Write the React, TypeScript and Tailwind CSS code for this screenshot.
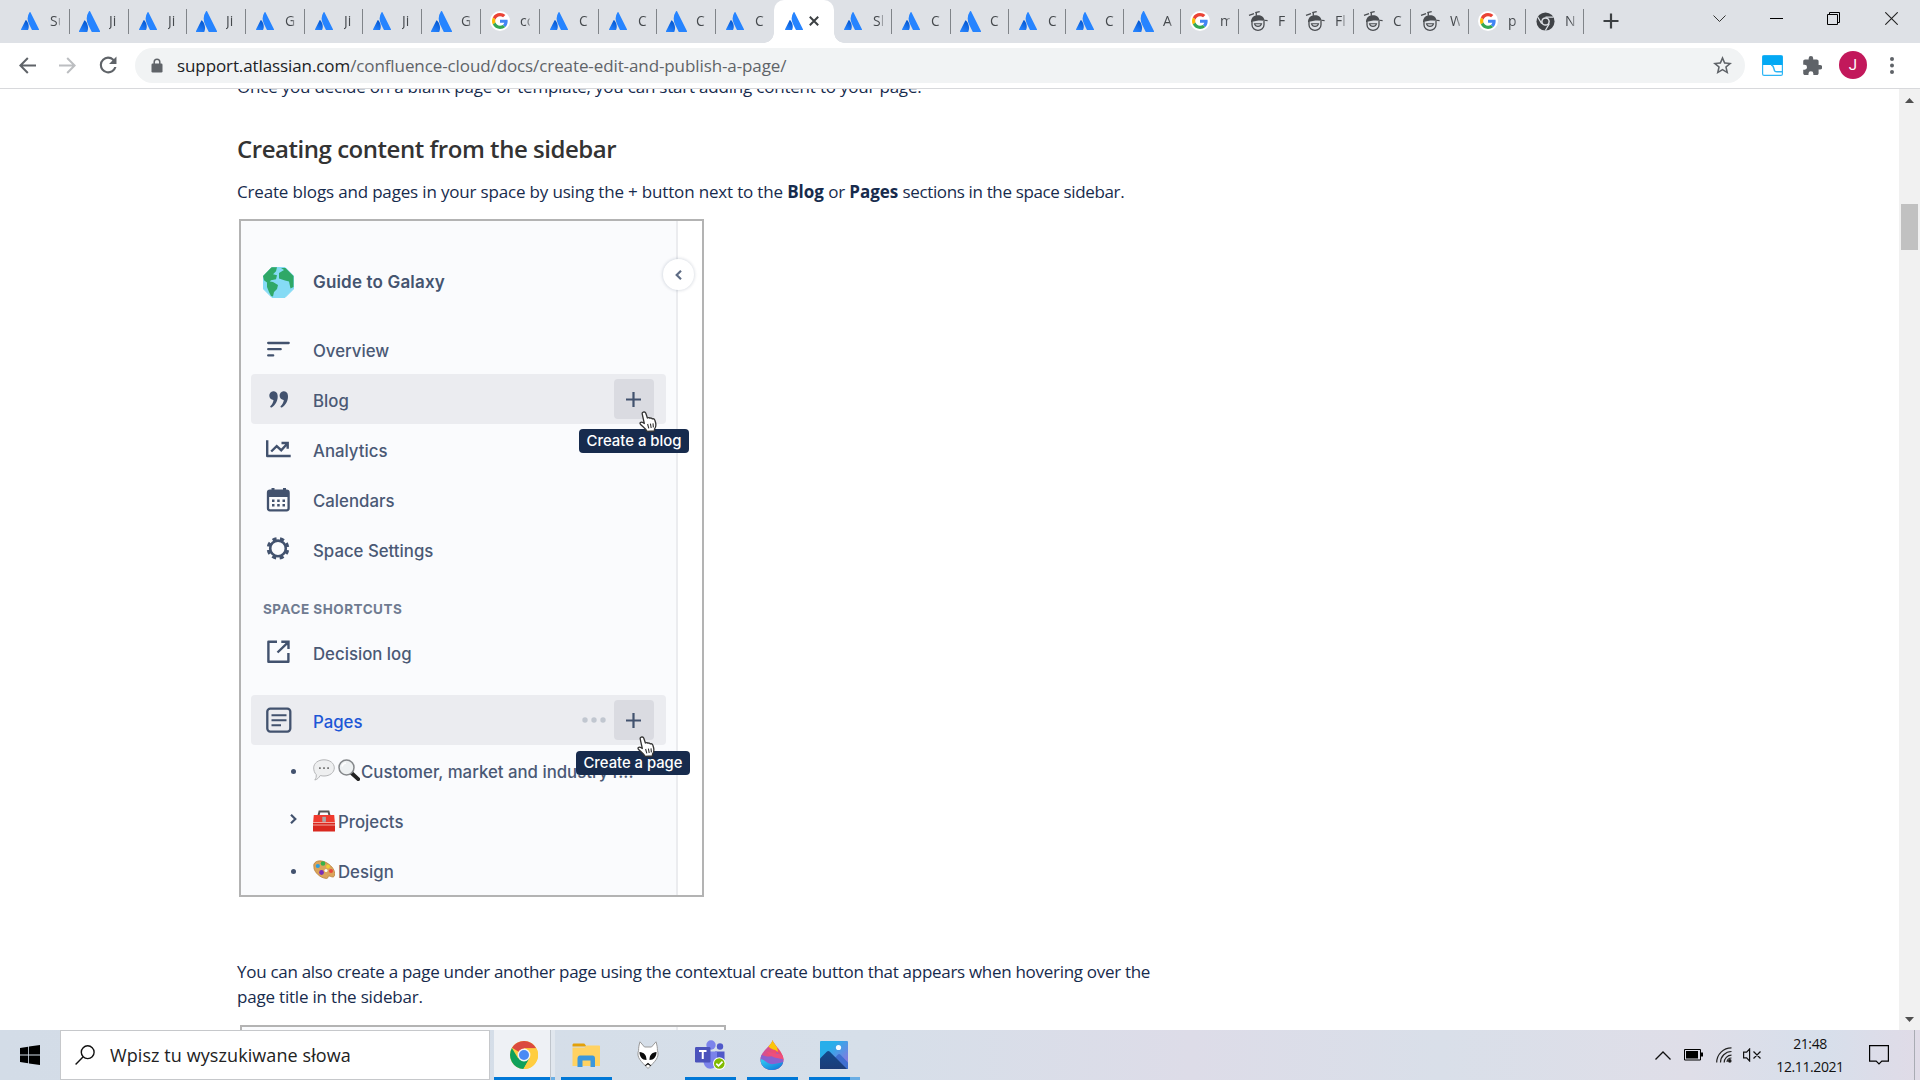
import type { ReactNode } from "react";

type Favicon = "atl" | "atlLarge" | "google" | "hat" | "chrome";
type Tab = { icon: Favicon; text: string; width: number };

const leftTabs: Tab[] = [
  { icon: "atl", text: "Su", width: 59 },
  { icon: "atlLarge", text: "Ji", width: 59 },
  { icon: "atl", text: "Ji", width: 58 },
  { icon: "atlLarge", text: "Ji", width: 59 },
  { icon: "atl", text: "G", width: 59 },
  { icon: "atl", text: "Ji", width: 58 },
  { icon: "atl", text: "Ji", width: 59 },
  { icon: "atlLarge", text: "G", width: 59 },
  { icon: "google", text: "co", width: 59 },
  { icon: "atl", text: "C", width: 59 },
  { icon: "atl", text: "C", width: 58 },
  { icon: "atlLarge", text: "C", width: 59 },
  { icon: "atl", text: "C", width: 58 },
];

const rightTabs: Tab[] = [
  { icon: "atl", text: "Sl", width: 58 },
  { icon: "atl", text: "C", width: 59 },
  { icon: "atlLarge", text: "C", width: 58 },
  { icon: "atl", text: "C", width: 57 },
  { icon: "atl", text: "C", width: 58 },
  { icon: "atlLarge", text: "A", width: 57 },
  { icon: "google", text: "m", width: 58 },
  { icon: "hat", text: "F", width: 57 },
  { icon: "hat", text: "Fl", width: 58 },
  { icon: "hat", text: "C", width: 57 },
  { icon: "hat", text: "W", width: 58 },
  { icon: "google", text: "p", width: 57 },
  { icon: "chrome", text: "N", width: 58 },
];

function Atlassian({ large = false }: { large?: boolean }) {
  return (
    <svg viewBox="0 0 24 24" className={large ? "h-[21px] w-[21px]" : "h-[18px] w-[18px]"}>
      <defs>
        <linearGradient id="atl" x1="10" y1="12" x2="3" y2="24" gradientUnits="userSpaceOnUse">
          <stop offset="0" stopColor="#0052cc" />
          <stop offset="1" stopColor="#2684ff" />
        </linearGradient>
      </defs>
      <path fill="url(#atl)" d="M7.12 11.084a.683.683 0 00-1.16.126L.075 22.974a.703.703 0 00.63 1.018h8.19a.678.678 0 00.63-.39c1.767-3.65.696-9.203-2.406-12.52z" />
      <path fill="#2684ff" d="M11.434.386a15.515 15.515 0 00-.906 15.317l3.95 7.9a.703.703 0 00.628.388h8.19a.703.703 0 00.63-1.017L12.63.38a.664.664 0 00-1.196.006z" />
    </svg>
  );
}

function Google() {
  return (
    <span className="flex h-5 w-5 items-center justify-center rounded-full bg-white">
      <svg viewBox="0 0 48 48" className="h-4 w-4">
        <path fill="#ea4335" d="M24 9.5c3.54 0 6.71 1.22 9.21 3.6l6.85-6.85C35.9 2.38 30.47 0 24 0 14.62 0 6.51 5.38 2.56 13.22l7.98 6.19C12.43 13.72 17.74 9.5 24 9.5z" />
        <path fill="#4285f4" d="M46.98 24.55c0-1.57-.15-3.09-.38-4.55H24v9.02h12.94c-.58 2.96-2.26 5.48-4.78 7.18l7.73 6c4.51-4.18 7.09-10.36 7.09-17.65z" />
        <path fill="#fbbc05" d="M10.53 28.59c-.48-1.45-.76-2.99-.76-4.59s.27-3.14.76-4.59l-7.98-6.19C.92 16.46 0 20.12 0 24c0 3.88.92 7.54 2.56 10.78l7.97-6.19z" />
        <path fill="#34a853" d="M24 48c6.48 0 11.93-2.13 15.89-5.81l-7.73-6c-2.15 1.45-4.92 2.3-8.16 2.3-6.26 0-11.57-4.22-13.47-9.91l-7.98 6.19C6.51 42.62 14.62 48 24 48z" />
      </svg>
    </span>
  );
}

function HatFace() {
  return (
    <svg viewBox="0 0 20 20" className="h-5 w-5" fill="none" stroke="#4a4d51">
      <path fill="#4a4d51" stroke="none" d="M3 10.200C3.500 6 6.500 4 10 4.200c3.600 0 6 2 6.400 4.600l3.200.2v1.300C14 8.900 8.500 9.200 3 11.200z" />
      <path strokeWidth="1.300" d="M4 10.500v3.200a6 5.600 0 0012 0v-3.800" />
      <path strokeWidth="1.100" d="M6.500 12.800c1 3.400 6 3.400 7 0z" />
      <path strokeWidth="1.300" d="M1 4.300l5-1.600M7.200 1.600l4.500-1M8.300 1.200v3.500" />
    </svg>
  );
}

function ChromeMono() {
  return (
    <svg viewBox="0 0 20 20" className="h-[19px] w-[19px]">
      <circle cx="10" cy="10" r="9.500" fill="#3f4246" />
      <circle cx="10" cy="10" r="4.600" fill="#dee1e6" />
      <circle cx="10" cy="10" r="3" fill="#3f4246" />
      <path d="M10 5.400h8.500M6 12.300L1.800 5.200M14 12.300L9.800 19.500" stroke="#dee1e6" strokeWidth="1.300" />
    </svg>
  );
}

function FaviconView({ icon }: { icon: Favicon }) {
  if (icon === "google") return <Google />;
  if (icon === "hat") return <HatFace />;
  if (icon === "chrome") return <ChromeMono />;
  return <Atlassian large={icon === "atlLarge"} />;
}

function TabView({ tab, divider = true }: { tab: Tab; divider?: boolean }) {
  return (
    <div className="flex h-[43px] shrink-0 items-center" style={{ width: tab.width }}>
      <span className="mb-px ml-2 flex w-[22px] shrink-0 justify-center">
        <FaviconView icon={tab.icon} />
      </span>
      <span className="mb-[2px] ml-[9px] w-[10px] overflow-hidden font-['Open_Sans'] text-[14px] leading-5 whitespace-nowrap text-[#45494d] [mask-image:linear-gradient(90deg,#000_60%,rgba(0,0,0,0.350))]">
        {tab.text}
      </span>
      {divider && <span className="ml-auto h-[25px] w-px bg-[#808489]" />}
    </div>
  );
}

function TabStrip() {
  return (
    <div className="flex h-[43px] items-center bg-[#dee1e6] pl-[11px]">
      {leftTabs.map((t, i) => (
        <TabView key={i} tab={t} divider={i < leftTabs.length - 1} />
      ))}
      <div className="relative flex h-[43px] w-[60px] shrink-0 items-center rounded-t-[10px] bg-white">
        <span className="absolute bottom-0 -left-[10px] h-[10px] w-[10px] bg-[radial-gradient(circle_at_0_0,#dee1e6_9.5px,white_10px)]" />
        <span className="absolute -right-[10px] bottom-0 h-[10px] w-[10px] bg-[radial-gradient(circle_at_100%_0,#dee1e6_9.5px,white_10px)]" />
        <span className="mb-px ml-[11px]">
          <Atlassian />
        </span>
        <svg viewBox="0 0 10 10" className="mb-px ml-[6px] h-[10px] w-[10px]" stroke="#3c4043" strokeWidth="2">
          <path d="M.8.8l8.400 8.400M9.200.8L.8 9.200" />
        </svg>
      </div>
      {rightTabs.map((t, i) => (
        <TabView key={i} tab={t} />
      ))}
      <svg viewBox="0 0 16 16" className="mb-px ml-[19px] h-4 w-4" stroke="#3c4043" strokeWidth="2.200">
        <path d="M8 .5v15M.5 8h15" />
      </svg>
      <div className="mr-[22px] mb-[6px] ml-auto flex items-center gap-[44px]">
        <svg viewBox="0 0 13 13" className="h-[13px] w-[13px]" fill="none" stroke="#333">
          <path d="M.5 3.500l6 6 6-6" />
        </svg>
        <svg viewBox="0 0 13 13" className="h-[13px] w-[13px]" fill="none" stroke="#000">
          <path d="M0 6.500h13" />
        </svg>
        <svg viewBox="0 0 13 13" className="h-[13px] w-[13px]" fill="none" stroke="#000">
          <path d="M.5 2.500h10v10H.5zM2.500 2.500v-2h10v10h-2" />
        </svg>
        <svg viewBox="0 0 13 13" className="ml-px h-[13px] w-[13px]" fill="none" stroke="#222" strokeWidth="1.100">
          <path d="M.3.3l12.400 12.400M12.700.3L.3 12.700" />
        </svg>
      </div>
    </div>
  );
}

function Toolbar() {
  return (
    <div className="flex h-[46px] items-center border-b border-[#d8d9dc] bg-white pr-[22px] pb-px pl-[19px]">
      <svg viewBox="0 0 16 16" className="h-[17px] w-[17px]" fill="none" stroke="#5f6368" strokeWidth="1.900">
        <path d="M16 8H1.500M8.300 1L1.300 8l7 7" />
      </svg>
      <svg viewBox="0 0 16 16" className="ml-[23px] h-[17px] w-[17px]" fill="none" stroke="#bcbec1" strokeWidth="1.900">
        <path d="M0 8h14.500M7.700 1l7 7-7 7" />
      </svg>
      <svg viewBox="3.500 3.500 17 17" className="ml-[23px] h-[18px] w-[18px]" fill="#5f6368">
        <path d="M17.650 6.350A7.960 7.960 0 0012 4a8 8 0 108 10h-2.080A6 6 0 1112 6c1.660 0 3.140.69 4.220 1.780L13 11h7V4l-2.350 2.350z" />
      </svg>
      <div className="ml-[18px] flex h-[35px] w-[1610px] items-center rounded-full bg-[#f1f3f4] pr-[13px] pl-[16px]">
        <svg viewBox="0 0 12 15" className="h-[15px] w-[12px]">
          <path d="M3.200 7V4a2.800 2.800 0 015.600 0v3" fill="none" stroke="#5f6368" strokeWidth="1.500" />
          <rect x=".5" y="5.500" width="11" height="9" rx="1.200" fill="#5f6368" />
        </svg>
        <span className="ml-[14px] pt-px font-['Open_Sans'] text-[17px] leading-6 tracking-[-0.100px] whitespace-nowrap text-[#5f6368]">
          <span className="text-[#202124]">support.atlassian.com</span>/confluence-cloud/docs/create-edit-and-publish-a-page/
        </span>
        <svg viewBox="2 2 20 20" className="ml-auto h-[19px] w-[19px]" fill="#5f6368">
          <path d="M22 9.240l-7.190-.62L12 2 9.190 8.630 2 9.240l5.460 4.730L5.820 21 12 17.270 18.180 21l-1.630-7.030L22 9.240zM12 15.400l-3.760 2.270 1-4.280-3.320-2.880 4.380-.38L12 6.100l1.710 4.040 4.380.38-3.320 2.880 1 4.280L12 15.400z" />
        </svg>
      </div>
      <svg viewBox="0 0 21 21" className="ml-[17px] h-[21px] w-[21px]">
        <rect x=".6" y=".6" width="19.800" height="19.800" rx="1.500" fill="#fff" stroke="#2db5f5" strokeWidth="1.200" />
        <path d="M.5.8h20V10H.5z" fill="#03a9f4" />
        <path d="M9 10c2.200 0 2.400 1.500 3 4s1 2.700 3 2.700h5" fill="none" stroke="#2db5f5" strokeWidth="1.400" />
      </svg>
      <svg viewBox="2 1 20.500 21" className="ml-[20px] h-[19px] w-[19px]" fill="#5f6368">
        <path d="M20.500 11H19V7c0-1.100-.9-2-2-2h-4V3.500a2.500 2.500 0 00-5 0V5H4c-1.100 0-2 .9-2 2v3.800h1.500a2.700 2.700 0 010 5.400H2V20c0 1.100.9 2 2 2h3.800v-1.500a2.700 2.700 0 015.400 0V22H17c1.100 0 2-.9 2-2v-4h1.500a2.500 2.500 0 000-5z" />
      </svg>
      <span className="ml-[17px] flex h-7 w-7 items-center justify-center rounded-full bg-[#c2185b] font-['Roboto'] text-[15px] text-white">
        J
      </span>
      <svg viewBox="0 0 4 17" className="ml-[23px] h-[17px] w-1" fill="#5f6368">
        <circle cx="2" cy="2" r="2" />
        <circle cx="2" cy="8.500" r="2" />
        <circle cx="2" cy="15" r="2" />
      </svg>
    </div>
  );
}

const glyph = "#42526e";

function OverviewIcon() {
  return (
    <svg viewBox="0 0 26 26" className="h-[26px] w-[26px]" stroke={glyph} strokeWidth="2.300" strokeLinecap="round">
      <path d="M2.200 7h20.500M2.200 13.200h12.500M2.200 19.400h5" />
    </svg>
  );
}

function QuoteIcon() {
  return (
    <svg viewBox="0 0 26 26" className="h-[26px] w-[26px]" fill={glyph}>
      <path transform="translate(0 .8)" d="M3.300 9a4.100 4.100 0 018.300-.6c.7 4.600-2 9.800-6 12.200-1 .5-1.900-.5-1.100-1.300 1.700-1.700 2.700-3.900 3-6.200A4.100 4.100 0 013.300 9zM13.600 9a4.100 4.100 0 018.300-.6c.7 4.600-2 9.800-6 12.200-1 .5-1.900-.5-1.100-1.300 1.700-1.700 2.700-3.900 3-6.200A4.100 4.100 0 0113.600 9z" />
    </svg>
  );
}

function AnalyticsIcon() {
  return (
    <svg viewBox="0 0 26 26" className="h-[26px] w-[26px]" fill="none" stroke={glyph} strokeWidth="2.400">
      <path d="M1.200 4.200V20h23.500" strokeLinejoin="round" />
      <path d="M5.200 15.500l5.500-5.300 4.500 4 6-6.500M15.500 7h6.200v5.700" />
    </svg>
  );
}

function CalendarIcon() {
  return (
    <svg viewBox="0 0 26 26" className="mt-px h-[26px] w-[26px]">
      <rect x="2" y="3.700" width="20.600" height="19.600" rx="2" fill="none" stroke={glyph} strokeWidth="2.300" />
      <path d="M2 4h21v6H2zM5.500 1h3v4h-3zM17 1h3v4h-3z" fill={glyph} />
      <path d="M6 12.500h2.500V15H6zm5.200 0h2.500V15h-2.500zm5.300 0H19V15h-2.500zM6 17h2.500v2.500H6zm5.200 0h2.500v2.500h-2.500zm5.300 0H19v2.500h-2.500z" fill={glyph} />
    </svg>
  );
}

function GearIcon() {
  return (
    <svg viewBox="0 0 26 26" className="h-[26px] w-[26px]" fill="none" stroke={glyph}>
      <circle cx="12" cy="12.400" r="7.800" strokeWidth="2.600" />
      <circle cx="12" cy="12.400" r="9.700" strokeWidth="3.200" strokeDasharray="4.100 3.518" strokeDashoffset="-1.760" />
    </svg>
  );
}

function ShortcutIcon() {
  return (
    <svg viewBox="0 0 26 26" className="h-[26px] w-[26px]" fill="none" stroke={glyph} strokeWidth="2.400">
      <path d="M11 2.700H2.400v20h20V14" strokeLinejoin="round" />
      <path d="M15.300 2.700h7.200V10M22 3.400L11.500 13.500" />
      <path d="M17.800 2.500h5v5z" fill={glyph} stroke="none" />
    </svg>
  );
}

function PagesIcon() {
  return (
    <svg viewBox="0 0 26 26" className="h-[26px] w-[26px]" fill="none" stroke={glyph} strokeWidth="2.300">
      <rect x="1.300" y="1.600" width="23" height="23" rx="3" />
      <path d="M5.500 8.300h15M5.500 13.200h15M5.500 18.200h9.500" strokeWidth="2" />
    </svg>
  );
}

function Globe() {
  return (
    <svg viewBox="0 0 31 31" className="h-[31px] w-[31px]">
      <path d="M9 .5h13L30.500 9v13L22 30.500H9L.5 22V9z" fill="#85dbf5" stroke="#85dbf5" strokeLinejoin="round" />
      <path d="M8.500.2H14l-1 4-3 3 4 1-1 4-5 1-3 3-4-3L0 9zM4 14l6 1 5 3-1 4-3 3-1 4.500-2-.500-2-4-2-5zM16 6l5-3-3-2h4.500l8 8v11l-3 1.500-1.500-7-4-1-6-2z" fill="#2fa867" />
    </svg>
  );
}

function Bubble() {
  return (
    <svg viewBox="0 0 22 22" className="h-[22px] w-[22px]">
      <path d="M11 .8c5.800 0 10.300 3.400 10.300 8.100S16.800 17 11 17c-1.300 0-2.600-.2-3.700-.5C6 18.700 4 20.700 1.800 21c1.200-1.500 1.700-3.500 1.400-5.500C1.600 14 .7 11.600.7 8.900.7 4.200 5.200.8 11 .8z" fill="#eeeff0" stroke="#b4b5b7" />
      <path d="M6 9.100h1.800M10.100 9.100h1.800M14.200 9.100H16" stroke="#777" strokeWidth="1.800" />
    </svg>
  );
}

function Loupe() {
  return (
    <svg viewBox="0 0 22 22" className="h-[22px] w-[22px]">
      <path d="M13.500 14l6.700 6.200" stroke="#222" strokeWidth="3.800" strokeLinecap="round" />
      <circle cx="8.500" cy="8.500" r="7.500" fill="#eef1f2" stroke="#85888b" strokeWidth="1.500" />
      <path d="M4 7.500c.5-2 2-3.300 4-3.500" stroke="#fff" strokeWidth="1.600" fill="none" />
    </svg>
  );
}

function Toolbox() {
  return (
    <svg viewBox="0 0 22 22" className="mt-px h-[22px] w-[22px]">
      <path d="M5.500 5.500l1-4h9l1 4" fill="none" stroke="#555" strokeWidth="2" />
      <path d="M.8 5h20.400l.8 9H0z" fill="#f03a2e" />
      <path d="M0 12.500h22v9H0z" fill="#d9281f" />
      <path d="M0 12.500h22M0 15h22" stroke="#f2b3ac" strokeWidth=".9" />
      <rect x="9.300" y="6.800" width="3.600" height="5" fill="#a8a8a8" />
    </svg>
  );
}

function Palette() {
  return (
    <svg viewBox="0 0 22 22" className="h-[22px] w-[22px]">
      <path d="M1 5C3 1 9 1 14 4s8.500 7.500 7.500 12.500c-1 3-4 .5-5.500.5s-.5 2.500-2.500 2.500C7 19 2 13.500 1 9.500 1 8 .5 6.500 1 5z" fill="#dba45a" stroke="#b9803a" strokeWidth=".8" />
      <circle cx="10" cy="4.500" r="2.300" fill="#36b24a" />
      <circle cx="4.800" cy="7" r="2.100" fill="#2b9fe0" />
      <circle cx="15" cy="7.500" r="1.900" fill="#f1cf32" />
      <circle cx="8.500" cy="13.500" r="2.400" fill="#7a2fb8" />
      <circle cx="18" cy="12" r="2" fill="#e8483b" />
      <circle cx="13" cy="11.500" r="1.600" fill="#fafbfc" />
    </svg>
  );
}

function HandCursor() {
  return (
    <svg viewBox="0 0 19 21" className="h-[21px] w-[19px]" strokeLinejoin="round">
      <path d="M4.200 1.200c1.200-.6 2.300.1 2.700 1.300L8.400 7c.8-.7 2-.6 2.500.3.9-.6 2-.3 2.400.6 1-.4 2-.1 2.400 1 1 2.800 2.500 6-.1 9l-.3 2.100-7.200.4c-1.500-3-4.500-4.800-6.700-7.200-1-1.400.5-2.600 1.900-1.900l2 1.200L3.300 3.300c-.3-.9.1-1.800.9-2.100z" fill="#fff" stroke="#333" strokeWidth="1.300" />
      <path d="M8.600 13l1.200 4.300M11.400 12.700l.8 4.300M14 12.400l.4 4" stroke="#333" strokeWidth="1.100" fill="none" />
    </svg>
  );
}

function PlusButton({ tip, tipClass, cursorClass }: { tip: string; tipClass: string; cursorClass: string }) {
  return (
    <span className="relative mr-3 flex h-10 w-10 items-center justify-center rounded-[4px] bg-[#dadbe1] pr-px">
      <svg viewBox="0 0 15 15" className="h-[15px] w-[15px]" stroke={glyph} strokeWidth="2.200">
        <path d="M7.500 0v15M0 7.500h15" />
      </svg>
      <span className={tipClass}>{tip}</span>
      <span className={cursorClass}>
        <HandCursor />
      </span>
    </span>
  );
}

function Row({ icon, label, children, active = false, blue = false }: { icon: ReactNode; label: string; children?: ReactNode; active?: boolean; blue?: boolean }) {
  return (
    <div className={active ? "relative z-10 flex h-[50px] items-center rounded-[4px] bg-[#ebecf0] pl-[15px]" : "flex h-[50px] items-center pl-[15px]"}>
      {icon}
      <span className={blue ? "ml-[21px] pt-[3px] text-[#1d57d6]" : "ml-[21px] pt-[3px]"}>{label}</span>
      <span className="ml-auto flex items-center">{children}</span>
    </div>
  );
}

function TreeRow({ expandable = false, emojis, label, tight = false }: { expandable?: boolean; emojis: ReactNode; label: string; tight?: boolean }) {
  return (
    <div className="flex h-[50px] items-center pl-[39px]">
      <span className="flex w-[7px] justify-center">
        {expandable ? (
          <svg viewBox="0 0 7 10" className="mb-[2px] h-[10px] w-[7px]" fill="none" stroke={glyph} strokeWidth="2.200">
            <path d="M1 .8L5.300 5 1 9.200" />
          </svg>
        ) : (
          <span className="mt-[2px] h-[5px] w-[5px] rounded-full bg-[#42526e]" />
        )}
      </span>
      <span className="ml-4 flex gap-[3px]">{emojis}</span>
      <span className={tight ? "ml-px pt-[3px] whitespace-nowrap" : "ml-[3px] pt-[3px] whitespace-nowrap"}>{label}</span>
    </div>
  );
}

function SidebarFigure() {
  return (
    <div className="relative mt-[15px] ml-[2px] flex h-[678px] w-[465px] border-2 border-[#b3b3b3] bg-white font-['Inter'] text-[16.8px] leading-6 font-medium text-[#4a5975]">
      <div className="w-[437px] border-r-2 border-[#ebecef] bg-[#fafbfd] pt-9 pr-[10px] pl-[10px]">
        <div className="flex h-[50px] items-center pl-3">
          <Globe />
          <span className="ml-[19px] text-[17px] font-semibold tracking-[0.170px] text-[#44546f]">Guide to Galaxy</span>
        </div>
        <div className="mt-[17px]">
          <Row icon={<OverviewIcon />} label="Overview" />
          <Row icon={<QuoteIcon />} label="Blog" active>
            <PlusButton
              tip="Create a blog"
              tipClass="absolute top-[50px] -left-[35px] flex h-6 w-[110px] items-center justify-center rounded-[4px] bg-[#172b4d] text-[14.9px] whitespace-nowrap text-white"
              cursorClass="absolute top-[32px] left-[25px]"
            />
          </Row>
          <Row icon={<AnalyticsIcon />} label="Analytics" />
          <Row icon={<CalendarIcon />} label="Calendars" />
          <Row icon={<GearIcon />} label="Space Settings" />
        </div>
        <div className="flex h-[53px] items-center pt-[16px] pl-[12px] text-[13.5px] font-bold tracking-[0.5px] text-[#6f7b91]">
          SPACE SHORTCUTS
        </div>
        <Row icon={<ShortcutIcon />} label="Decision log" />
        <div className="mt-[18px]">
          <Row icon={<PagesIcon />} label="Pages" active blue>
            <svg viewBox="0 0 24 6" className="mr-[8px] h-[6px] w-6" fill="#c1c7d0">
              <circle cx="3" cy="3" r="2.700" />
              <circle cx="12" cy="3" r="2.700" />
              <circle cx="21" cy="3" r="2.700" />
            </svg>
            <PlusButton
              tip="Create a page"
              tipClass="absolute top-[51px] -left-[38px] flex h-6 w-[114px] items-center justify-center rounded-[4px] bg-[#172b4d] text-[14.8px] whitespace-nowrap text-white"
              cursorClass="absolute top-[36px] left-[23px]"
            />
          </Row>
          <TreeRow tight emojis={<><Bubble /><Loupe /></>} label="Customer, market and industry r..." />
          <TreeRow expandable emojis={<Toolbox />} label="Projects" />
          <TreeRow emojis={<Palette />} label="Design" />
        </div>
      </div>
      <span className="absolute top-[38px] left-[422px] flex h-[31px] w-[31px] items-center justify-center rounded-full bg-white shadow-[0_0_3px_1px_rgba(9,30,66,0.130)]">
        <svg viewBox="0 0 7 10" className="mr-px h-[10px] w-[7px]" fill="none" stroke="#5e6c84" strokeWidth="2.200">
          <path d="M6 .8L1.700 5 6 9.200" />
        </svg>
      </span>
    </div>
  );
}

function Article() {
  return (
    <main className="flex-1 overflow-hidden pl-[237px] font-['Open_Sans'] text-[17px] leading-[25px] whitespace-nowrap text-[#172b4d]">
      <p className="-mt-[15px] tracking-[-0.210px]">
        Once you decide on a blank page or template, you can start adding content to your page.
      </p>
      <h3 className="mt-[35px] text-[24px] leading-[30px] font-semibold tracking-[-0.460px] text-[#333]">
        Creating content from the sidebar
      </h3>
      <p className="mt-[15px] tracking-[-0.170px]">
        Create blogs and pages in your space by using the + button next to the{" "}
        <b className="tracking-[0px]">Blog</b> or <b className="tracking-[0px]">Pages</b>{" "}
        <span className="tracking-[-0.360px]">sections in the space sidebar.</span>
      </p>
      <SidebarFigure />
      <p className="mt-[62px] tracking-[-0.295px]">
        You can also create a page under another page using the contextual create button that appears when hovering over the
        <br />
        <span className="tracking-[-0.200px]">page title in the sidebar.</span>
      </p>
      <div className="mt-4 ml-[3px] flex h-20 w-[486px] border-2 border-[#b3b3b3]">
        <div className="w-[436px] border-r-2 border-[#ebecef] bg-[#fafbfd]" />
      </div>
    </main>
  );
}

function Scrollbar() {
  return (
    <div className="flex w-[21px] shrink-0 flex-col items-center bg-[#f1f1f1]">
      <svg viewBox="0 0 9 5" className="mt-[9px] h-[5px] w-[9px]" fill="#505050">
        <path d="M4.500 0L9 5H0z" />
      </svg>
      <span className="mt-[101px] h-[46px] w-[17px] bg-[#c1c1c1]" />
      <svg viewBox="0 0 9 5" className="mt-auto mb-2 h-[5px] w-[9px]" fill="#505050">
        <path d="M4.500 5L0 0h9z" />
      </svg>
    </div>
  );
}

function ChromeLogo() {
  return (
    <svg viewBox="0 0 28 28" className="h-7 w-7">
      <circle cx="14" cy="14" r="14" fill="#ffcd40" />
      <path d="M14 14L2 6.700A14 14 0 0126.200 7.300L14 7.300z" fill="#db4a3f" />
      <path d="M1.900 7A14 14 0 0013.500 28l6-10.500L14 14 8.200 17.400z" fill="#10a15a" />
      <path d="M14 7.500h12.400A14 14 0 0113.400 28l6.300-11z" fill="#ffcd40" />
      <circle cx="14" cy="14" r="6.400" fill="#f4f4f4" />
      <circle cx="14" cy="14" r="5" fill="#4a8af4" />
    </svg>
  );
}

function Folder() {
  return (
    <svg viewBox="0 0 28 28" className="h-7 w-7">
      <path d="M.5 4c0-1 .6-1.500 1.500-1.500h9.500c1.200 0 1.500.6 2 1.500l.8 1.500H.5z" fill="#e3a008" />
      <path d="M.5 6.500h12l2-2H27c.6 0 1 .4 1 1V25H.5z" fill="#ffd262" />
      <path d="M5.500 17.500c0-1.500.9-3 2.500-3h12.500c1.600 0 2.500 1.200 2.500 3V26h-4.500v-6.500h-8V26h-5z" fill="#3b97dd" />
    </svg>
  );
}

function Foobar() {
  return (
    <svg viewBox="0 0 24 28" className="h-7 w-6">
      <path d="M4 .8L8.500 6h7L20 .8c1 3 1.500 6 1.400 8.500 2.600 7-2.400 11-9.400 18.200C5 20.300 0 16.300 2.600 9.300 2.500 6.800 3 3.800 4 .8z" fill="#fff" stroke="#999" strokeWidth="1" />
      <path d="M3.500 11c4.500.3 7 2.800 7 8C6 19 3.500 15.500 3.500 11zM20.500 11c-4.500.3-7 2.800-7 8 4.500 0 7-3.500 7-8zM8.800 24.500l3.200-2.700 3.200 2.700-.8.6-2.400-1.700-2.400 1.700z" fill="#0a0a0a" />
    </svg>
  );
}

function Teams() {
  return (
    <svg viewBox="0 0 32 30" className="ml-[2px] h-[30px] w-8">
      <circle cx="16" cy="5" r="4.700" fill="#7b83eb" />
      <circle cx="25" cy="6.500" r="3.200" fill="#5059c9" />
      <path d="M20 11.500h9.500v8.500c0 3-2.500 5-5 4.800z" fill="#5059c9" />
      <path d="M8.500 11.500H22V21c0 5-3 7.700-6.700 7.700S8.500 25.500 8.500 21z" fill="#7b83eb" />
      <rect x="0" y="7" width="15.500" height="15.500" rx="1.200" fill="#4b53bc" />
      <path d="M4 11h7.500M7.750 11v8" stroke="#fff" strokeWidth="2" />
      <circle cx="24.300" cy="23.500" r="6.300" fill="#fff" />
      <circle cx="24.300" cy="23.500" r="5.300" fill="#7fba00" />
      <path d="M21.300 23.700l2.200 2.200 4-4.300" fill="none" stroke="#fff" strokeWidth="1.700" />
    </svg>
  );
}

function Paint3D() {
  return (
    <svg viewBox="0 0 24 30" className="h-[30px] w-6">
      <defs>
        <clipPath id="drop">
          <path d="M12.500 0C14 5 23.500 12 23.500 19.500 23.500 26 18 30 12 30S.5 26 .5 19.500C.5 11 11.500 6 12.500 0z" />
        </clipPath>
        <linearGradient id="pinkBand" x1="0" y1="0" x2="1" y2="1">
          <stop offset="0" stopColor="#a855c8" />
          <stop offset=".5" stopColor="#f04e6e" />
          <stop offset="1" stopColor="#e23d6d" />
        </linearGradient>
        <linearGradient id="blueBand" x1="0" y1="0" x2="1" y2="1">
          <stop offset="0" stopColor="#35d0f5" />
          <stop offset="1" stopColor="#0c6fd6" />
        </linearGradient>
      </defs>
      <g clipPath="url(#drop)">
        <path d="M0 0h24v30H0z" fill="url(#pinkBand)" />
        <path d="M8 4l4-5 5 8 1 5c-3-3-7-2-10-6z" fill="#fbc50b" />
        <path d="M0 14c8 4 14 3 17-2 3 3 7 6 7 9v9H0z" fill="#8a60cf" />
        <path d="M6 11c5 3 12 1 18 5v4c-6-3-13-1-18-9z" fill="#ee4f7c" />
        <path d="M0 19c6 1 7 6 14 5 4-1 7-1 10-2v8H0z" fill="url(#blueBand)" />
      </g>
    </svg>
  );
}

function Photos() {
  return (
    <svg viewBox="0 0 28 28" className="h-7 w-7">
      <defs>
        <linearGradient id="sky" x1="0" y1="0" x2="1" y2="1">
          <stop offset=".3" stopColor="#28aeea" />
          <stop offset=".8" stopColor="#7f7ee0" />
        </linearGradient>
        <linearGradient id="hill" x1="0" y1="0" x2="0" y2="1">
          <stop offset="0" stopColor="#134a8c" />
          <stop offset="1" stopColor="#1c3d78" />
        </linearGradient>
      </defs>
      <rect width="28" height="28" rx="1" fill="url(#sky)" />
      <path d="M12 20l6-6.500c.8-.7 1.500-.7 2.200 0L28 21.500V28H14z" fill="#3f6fd0" />
      <path d="M0 17.500l7-7c.8-.8 1.800-.8 2.600 0L27 28H0z" fill="url(#hill)" />
      <circle cx="18.500" cy="6.500" r="2.600" fill="#f5fbff" />
    </svg>
  );
}

function TaskButton({ children, running = false }: { children: ReactNode; running?: boolean }) {
  return (
    <div className="flex h-[50px] w-[51px] flex-col items-center">
      <span className="flex flex-1 items-center pt-[2px] pr-[2px]">{children}</span>
      <span className={running ? "h-[3px] w-full bg-[#0078d7]" : "h-[3px] w-full"} />
    </div>
  );
}

function Taskbar() {
  return (
    <footer className="flex h-[50px] items-center bg-[linear-gradient(90deg,#d3dce7_0%,#d6dfe9_45%,#dddce8_62%,#d9dfe9_75%,#dfdee8_88%,#d7dfeb_95%,#e0dbe7_100%)] font-['Open_Sans']">
      <svg viewBox="0 0 20 20" className="ml-5 h-5 w-5">
        <path d="M0 2.900l8.200-1.200v7.800H0zM9 1.600L20 0v9.500H9zM0 10.500h8.200v7.800L0 17.100zM9 10.500h11V20L9 18.400z" />
      </svg>
      <div className="ml-5 flex h-[50px] w-[430px] items-center border border-[#c6c8cb] bg-white pl-[14px]">
        <svg viewBox="0 0 20 20" className="h-5 w-5" fill="none" stroke="#111" strokeWidth="1.400">
          <circle cx="12.700" cy="7.200" r="6.400" />
          <path d="M8.200 11.800L.6 19.500" />
        </svg>
        <span className="ml-[15px] pb-px text-[18px] leading-6 tracking-[0.080px] text-[#222]">Wpisz tu wyszukiwane słowa</span>
      </div>
      <div className="ml-1 flex h-[50px]">
        <div className="flex h-[50px] w-[57px] flex-col items-center border-r border-[#bfc5cc] bg-[#eef1f5]">
          <span className="flex flex-1 items-center pt-[2px] pl-[3px]">
            <ChromeLogo />
          </span>
          <span className="h-[3px] w-full bg-[#0078d7]" />
        </div>
        <div className="flex w-1 flex-col justify-end bg-[#e1e7ee]">
          <span className="h-[3px] bg-[#6aaee4]" />
        </div>
      </div>
      <div className="ml-[6px] flex gap-[11px]">
        <TaskButton running><Folder /></TaskButton>
        <TaskButton><Foobar /></TaskButton>
        <TaskButton running><Teams /></TaskButton>
        <TaskButton running><Paint3D /></TaskButton>
        <div className="flex h-[50px] w-[51px] flex-col items-center">
          <span className="flex flex-1 items-center pt-[2px] pr-[2px]"><Photos /></span>
          <span className="flex h-[3px] w-full bg-[#6aaee4]">
            <span className="w-[41px] bg-[#0078d7]" />
          </span>
        </div>
      </div>
      <div className="ml-auto flex h-[50px] items-center">
        <svg viewBox="0 0 16 9" className="h-[9px] w-4" fill="none" stroke="#111" strokeWidth="1.300">
          <path d="M.5 8.500L8 1l7.500 7.500" />
        </svg>
        <svg viewBox="0 0 19 12" className="ml-[13px] h-3 w-[19px]">
          <path d="M.5.5h16v10.500H.5z" fill="none" stroke="#000" />
          <path d="M2 2h12v7.500H2zM17 3.500h2v4h-2z" />
        </svg>
        <svg viewBox="0 0 16 16" className="ml-[13px] h-4 w-4" fill="none" stroke="#222" strokeWidth="1.200">
          <path d="M.7 15.500A14.800 14.800 0 0115.500.8M4.500 15.500a11 11 0 0111-11M8.200 15.500a7.300 7.300 0 017.300-7.300" />
          <path d="M11 15a4.500 4.500 0 014.500-4" />
          <circle cx="13.800" cy="13.900" r="1.200" fill="#000" />
        </svg>
        <svg viewBox="0 0 18 14" className="ml-[11px] h-[14px] w-[18px]" fill="none" stroke="#111" strokeWidth="1.200">
          <path d="M.6 4.200h3l3-3.200v12l-3-3.200h-3zM10.500 3.500l7 7M17.500 3.500l-7 7" />
        </svg>
        <div className="ml-[15px] flex w-[68px] flex-col items-center text-[14px] leading-[23px] tracking-[-0.400px] text-[#111]">
          <span>21:48</span>
          <span>12.11.2021</span>
        </div>
        <svg viewBox="0 0 20 20" className="ml-[25px] h-5 w-5" fill="none" stroke="#000" strokeWidth="1.200">
          <path d="M.6.6h18.800v15.500h-6.600L10 18.900l-2.800-2.800H.6z" />
        </svg>
        <span className="mr-[5px] ml-[25px] h-[50px] w-px bg-[#a9abb3]" />
      </div>
    </footer>
  );
}

export default function App() {
  return (
    <div className="flex h-[1080px] w-[1920px] flex-col overflow-hidden bg-white">
      <TabStrip />
      <Toolbar />
      <div className="flex min-h-0 flex-1">
        <Article />
        <Scrollbar />
      </div>
      <Taskbar />
    </div>
  );
}
